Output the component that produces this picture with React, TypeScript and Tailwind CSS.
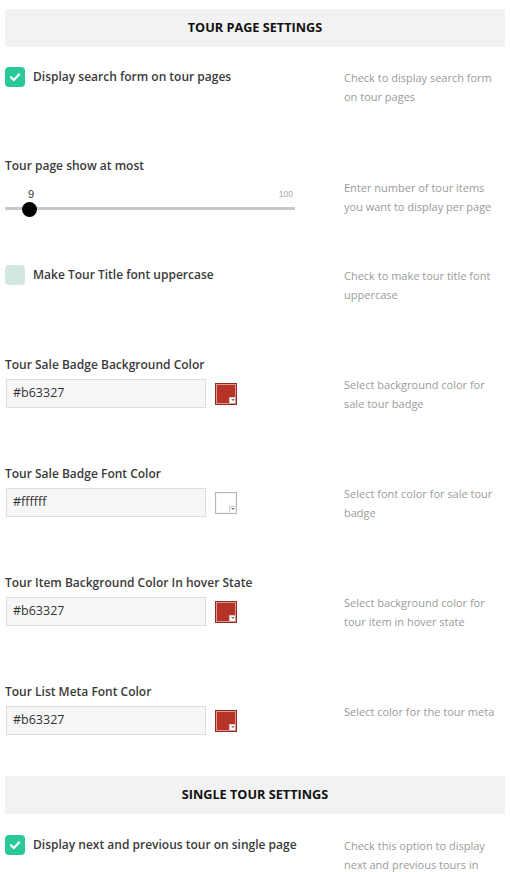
import React from "react";

interface colorRow {
  label: string;
  value: string;
  desc: string[];
}

const colorRows: colorRow[] = [
  { label: "Tour Sale Badge Background Color", value: "#b63327", desc: ["Select background color for", "sale tour badge"] },
  { label: "Tour Sale Badge Font Color", value: "#ffffff", desc: ["Select font color for sale tour", "badge"] },
  { label: "Tour Item Background Color In hover State", value: "#b63327", desc: ["Select background color for", "tour item in hover state"] },
  { label: "Tour List Meta Font Color", value: "#b63327", desc: ["Select color for the tour meta"] },
];

function SectionHeader({ title }: { title: string }) {
  return (
    <div className="h-[38px] bg-[#f2f2f2] flex items-center justify-center">
      <span className="text-[12.7px] font-bold text-[#111]">{title}</span>
    </div>
  );
}

function Desc({ lines }: { lines: string[] }) {
  return (
    <div className="w-[160px] text-[11px] leading-[19px] text-[#9b9b9b]">
      {lines.map((l) => (
        <div key={l} className="whitespace-nowrap">
          {l}
        </div>
      ))}
    </div>
  );
}

function Checkbox({ checked }: { checked: boolean }) {
  return (
    <span className={`w-5 h-5 rounded-[4px] flex items-center justify-center ${checked ? "bg-[#2bc99a]" : "bg-[#d3e7e1]"}`}>
      {checked && (
        <svg width="12" height="12" viewBox="0 0 12 12" fill="none">
          <path d="M2 6.2 L4.8 9 L10 3.4" stroke="white" strokeWidth="2.2" strokeLinecap="round" strokeLinejoin="round" />
        </svg>
      )}
    </span>
  );
}

function CheckRow({ label, checked, desc, h }: { label: string; checked: boolean; desc: string[]; h: string }) {
  return (
    <div className={`flex ${h}`}>
      <div className="w-[339px] flex items-start gap-2">
        <Checkbox checked={checked} />
        <span className="text-[12px] leading-[20px] font-semibold text-[#3a3a3a]">{label}</span>
      </div>
      <div className="pt-[1px]">
        <Desc lines={desc} />
      </div>
    </div>
  );
}

function Swatch({ color }: { color: string }) {
  const white = color.toLowerCase() === "#ffffff";
  return (
    <div className={`relative w-[22px] h-[22px] border p-[1px] ${white ? "border-[#b5b5b5] bg-[#f4f4f4]" : "border-[#8f2a20] bg-[#dc9a92]"}`}>
      <div className="w-full h-full" style={{ backgroundColor: color }} />
      <div className={`absolute right-[1px] bottom-[1px] w-[6px] h-[6px] bg-white border-l border-t flex items-center justify-center ${white ? "border-[#c8c8c8]" : "border-[#e5c5c0]"}`}>
        <span className="w-0 h-0 border-l-[2px] border-r-[2px] border-t-[2px] border-l-transparent border-r-transparent border-t-[#777]" />
      </div>
    </div>
  );
}

function ColorField({ row }: { row: colorRow }) {
  return (
    <div className="flex h-[109px]">
      <div className="w-[339px]">
        <div className="text-[12px] leading-[18px] font-semibold text-[#3a3a3a]">{row.label}</div>
        <div className="mt-[5px] flex items-center gap-[9px]">
          <div className="ml-[1px] w-[200px] h-[29px] bg-[#f7f7f7] border border-[#dddddd] flex items-center px-[6px] text-[12.5px] text-[#333]">
            {row.value}
          </div>
          <Swatch color={row.value} />
        </div>
      </div>
      <div className="pt-[19px]">
        <Desc lines={row.desc} />
      </div>
    </div>
  );
}

function SliderRow() {
  const value = 9;
  return (
    <div className="flex h-[108px]">
      <div className="w-[339px]">
        <div className="text-[12px] leading-[18px] font-semibold text-[#3a3a3a]">Tour page show at most</div>
        <div className="relative w-[290px] h-[44px] mt-[1px]">
          <span className="absolute left-[18px] top-[12px] w-4 text-center text-[11px] leading-[12px] text-[#333] font-['Liberation_Sans',sans-serif]">{value}</span>
          <span className="absolute right-[2px] top-[13px] text-[8.5px] leading-[10px] text-[#aaa] font-['Liberation_Sans',sans-serif]">100</span>
          <div className="absolute left-0 right-0 top-[31px] h-[3px] bg-[#c9c9c9]" />
          <div className="absolute left-[17px] top-[26px] w-[15px] h-[15px] rounded-full bg-black" />
        </div>
      </div>
      <div className="pt-[21px]">
        <Desc lines={["Enter number of tour items", "you want to display per page"]} />
      </div>
    </div>
  );
}

export default function App(): React.JSX.Element {
  return (
    <main className="w-[510px] min-h-[872px] bg-white px-[5px] pt-[9px] font-['Open_Sans',sans-serif]">
      <SectionHeader title="TOUR PAGE SETTINGS" />
      <div className="mt-5">
        <CheckRow label="Display search form on tour pages" checked desc={["Check to display search form", "on tour pages"]} h="h-[90px]" />
        <SliderRow />
        <CheckRow label="Make Tour Title font uppercase" checked={false} desc={["Check to make tour title font", "uppercase"]} h="h-[91px]" />
        {colorRows.map((row) => (
          <ColorField key={row.label} row={row} />
        ))}
      </div>
      <div className="-mt-[16px]">
        <SectionHeader title="SINGLE TOUR SETTINGS" />
      </div>
      <div className="mt-[21px]">
        <CheckRow label="Display next and previous tour on single page" checked desc={["Check this option to display", "next and previous tours in"]} h="h-[60px]" />
      </div>
    </main>
  );
}
